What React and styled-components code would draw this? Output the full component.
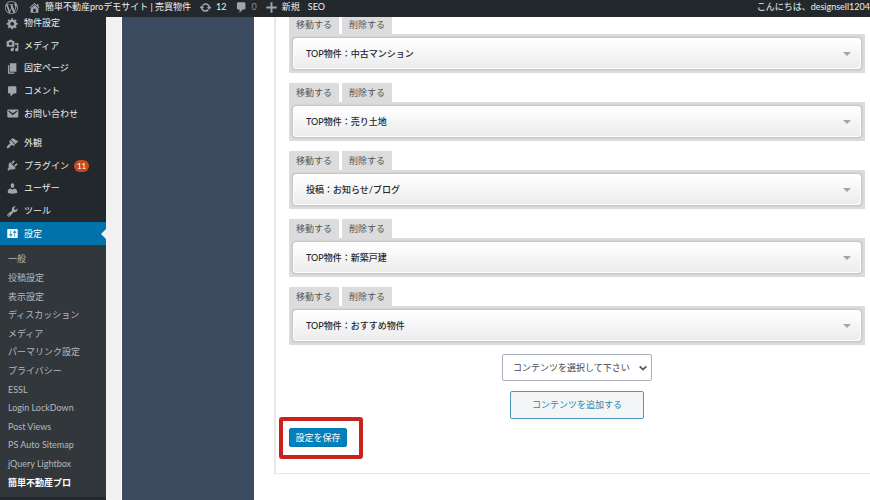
import React from "react";
import styled, { createGlobalStyle } from "styled-components";

const GlobalStyle = createGlobalStyle`
  * {
    box-sizing: border-box;
  }
  body {
    margin: 0;
    background: #fff;
    color: #23282d;
    font-family: Lato, "Noto Sans CJK JP", sans-serif;
    font-size: 9px;
    line-height: 14px;
  }
  button, select {
    font: inherit;
    margin: 0;
    cursor: pointer;
  }
  a {
    color: inherit;
    text-decoration: none;
  }
  ul {
    list-style: none;
    margin: 0;
    padding: 0;
  }
`;

const icons = {
  wordpress:
    "M20 10c0-5.51-4.49-10-10-10C4.48 0 0 4.49 0 10c0 5.52 4.48 10 10 10 5.51 0 10-4.48 10-10zM7.78 15.37L4.37 6.22c.55-.02 1.17-.08 1.17-.08.5-.06.44-1.13-.06-1.11 0 0-1.45.11-2.37.11-.18 0-.37 0-.58-.01C4.12 2.69 6.87 1.11 10 1.11c2.33 0 4.45.87 6.05 2.34-.68-.11-1.65.39-1.65 1.58 0 .74.45 1.36.9 2.1.35.61.55 1.36.55 2.46 0 1.49-1.4 5-1.4 5l-3.03-8.37c.54-.02.82-.17.82-.17.5-.05.44-1.25-.06-1.22 0 0-1.44.12-2.38.12-.87 0-2.33-.12-2.33-.12-.5-.03-.56 1.2-.06 1.22l.92.08 1.26 3.41zM17.41 10c.24-.64.74-1.87.43-4.25.7 1.29 1.05 2.71 1.05 4.25 0 3.29-1.73 6.24-4.4 7.78.97-2.59 1.94-5.2 2.92-7.78zM6.1 18.09C3.12 16.65 1.11 13.53 1.11 10c0-1.3.23-2.48.72-3.59C3.25 10.3 4.67 14.2 6.1 18.09zm4.03-6.63l2.58 6.98c-.86.29-1.76.45-2.71.45-.79 0-1.57-.11-2.29-.33.81-2.38 1.62-4.74 2.42-7.1z",
  home:
    "M16 8.5l1.53 1.53-1.06 1.06L10 4.6l-6.47 6.49-1.06-1.06L10 2.5l4 4v-2h2v4zm-6-2.46l6 5.99V18H4v-5.97zM12 17v-5H8v5h4z",
  update:
    "M10.2 3.28c3.53 0 6.43 2.61 6.92 6h2.08l-3.5 4-3.5-4h2.32c-.45-1.97-2.21-3.45-4.32-3.45-1.45 0-2.73.71-3.54 1.78L4.95 5.66C6.23 4.2 8.11 3.28 10.2 3.28zm-.4 13.44c-3.52 0-6.43-2.61-6.92-6H.8l3.5-4c1.17 1.33 2.33 2.67 3.5 4H5.48c.45 1.97 2.21 3.45 4.32 3.45 1.45 0 2.73-.71 3.54-1.78l1.71 1.95c-1.28 1.46-3.15 2.38-5.25 2.38z",
  comment:
    "M5 2h9c1.1 0 2 .9 2 2v7c0 1.1-.9 2-2 2h-2l-5 5v-5H5c-1.1 0-2-.9-2-2V4c0-1.1.9-2 2-2z",
  plus: "M18 8.5v3h-6.5V18h-3v-6.5H2v-3h6.5V2h3v6.5z",
  generic:
    "M18 12h-2.18c-.17.7-.44 1.35-.81 1.93l1.54 1.54-2.1 2.1-1.54-1.54c-.58.36-1.23.63-1.91.79V19H8v-2.18c-.68-.16-1.33-.43-1.91-.79l-1.54 1.54-2.12-2.12 1.54-1.54c-.36-.58-.63-1.23-.79-1.91H1V9.03h2.17c.16-.7.44-1.35.8-1.94L2.43 5.55l2.1-2.1 1.54 1.54c.58-.37 1.24-.64 1.93-.81V2h3v2.18c.68.16 1.33.43 1.91.79l1.54-1.54 2.12 2.12-1.54 1.54c.36.59.64 1.24.8 1.94H18V12zm-8.5 1.5c1.66 0 3-1.34 3-3s-1.34-3-3-3-3 1.34-3 3 1.34 3 3 3z",
  media:
    "M13 11V4c0-.55-.45-1-1-1h-1.67L9 1H5L3.67 3H2c-.55 0-1 .45-1 1v7c0 .55.45 1 1 1h10c.55 0 1-.45 1-1zM7 4.5c1.38 0 2.5 1.12 2.5 2.5S8.38 9.5 7 9.5 4.5 8.38 4.5 7 5.62 4.5 7 4.5zM14 6h5v10.5c0 1.38-1.12 2.5-2.5 2.5S14 17.88 14 16.5s1.12-2.5 2.5-2.5c.17 0 .34.02.5.05V9h-3V6zm-4 8.05V13h2v3.5c0 1.38-1.12 2.5-2.5 2.5S7 17.88 7 16.5 8.12 14 9.5 14c.17 0 .34.02.5.05z",
  page: "M6 15V2h10v13H6zm-1 1h8v2H3V5h2v11z",
  mail:
    "M3.87 4h13.25C18.37 4 19 4.59 19 5.79v8.42c0 1.19-.63 1.79-1.88 1.79H3.87c-1.25 0-1.88-.6-1.88-1.79V5.79c0-1.2.63-1.79 1.88-1.79zm6.62 8.6l6.74-5.53c.24-.2.43-.66.13-1.07-.29-.41-.82-.42-1.17-.17l-5.7 3.86L4.8 5.83c-.35-.25-.88-.24-1.17.17-.3.41-.11.87.13 1.07z",
  appearance:
    "M14.48 11.06L7.41 3.99l1.5-1.5c.5-.56 2.3-.47 3.51.32 1.21.8 1.43 1.28 2.91 2.1 1.18.64 2.45 1.26 4.45.85zm-.71.71L6.7 4.7 4.93 6.47c-.39.39-.39 1.02 0 1.41l1.06 1.06c.39.39.39 1.03 0 1.42-.6.6-1.43 1.11-2.21 1.69-.35.26-.7.53-1.01.84C1.43 14.23.4 16.08 1.4 17.07c.99 1 2.84-.03 4.18-1.36.31-.31.58-.66.85-1.02.57-.78 1.08-1.61 1.69-2.21.39-.39 1.02-.39 1.41 0l1.06 1.06c.39.39 1.02.39 1.41 0z",
  plugins:
    "M13.11 4.36L9.87 7.6 8 5.73l3.24-3.24c.35-.34 1.05-.2 1.56.32.52.51.66 1.21.31 1.55zm-8 1.77l.91-1.12 9.01 9.01-1.19.84c-.71.71-2.63 1.16-3.82 1.16H6.14L4.9 17.26c-.59.59-1.54.59-2.12 0-.59-.58-.59-1.53 0-2.12l1.24-1.24v-3.88c0-1.13.4-3.19 1.09-3.89zm7.26 3.97l3.24-3.24c.34-.35 1.04-.21 1.55.31.52.51.66 1.21.31 1.55l-3.24 3.25z",
  users:
    "M10 9.25c-2.27 0-2.73-3.44-2.73-3.44C7 4.02 7.82 2 9.97 2c2.16 0 2.98 2.02 2.71 3.81 0 0-.41 3.44-2.68 3.44zm0 2.57L12.72 10c2.39 0 4.52 2.33 4.52 4.53v2.49s-3.65 1.13-7.24 1.13c-3.65 0-7.24-1.13-7.24-1.13v-2.49c0-2.25 1.94-4.48 4.47-4.48z",
  tools:
    "M16.68 9.77c-1.34 1.34-3.3 1.67-4.95.99l-5.41 6.52c-.99.99-2.59.99-3.58 0s-.99-2.59 0-3.57l6.52-5.42c-.68-1.65-.35-3.61.99-4.95 1.28-1.28 3.12-1.62 4.72-1.06l-2.89 2.89 2.82 2.82 2.86-2.87c.53 1.58.18 3.39-1.08 4.65zM3.81 16.21c.4.39 1.04.39 1.43 0 .4-.4.4-1.04 0-1.43-.39-.4-1.03-.4-1.43 0-.39.39-.39 1.03 0 1.43z",
  settings:
    "M18 16V4c0-.55-.45-1-1-1H3c-.55 0-1 .45-1 1v12c0 .55.45 1 1 1h14c.55 0 1-.45 1-1zM8 11h1c.55 0 1 .45 1 1s-.45 1-1 1H8v1.5c0 .28-.22.5-.5.5s-.5-.22-.5-.5V13H6c-.55 0-1-.45-1-1s.45-1 1-1h1V5.5c0-.28.22-.5.5-.5s.5.22.5.5V11zm5-2h-1c-.55 0-1-.45-1-1s.45-1 1-1h1V5.5c0-.28.22-.5.5-.5s.5.22.5.5V7h1c.55 0 1 .45 1 1s-.45 1-1 1h-1v5.5c0 .28-.22.5-.5.5s-.5-.22-.5-.5V9z",
};

const Svg = styled.svg`
  flex: none;
  width: 13px;
  height: 13px;
  fill: ${(p) => p.$color || "#a0a5aa"};
`;

const Icon = ({ name, color }) => (
  <Svg viewBox="0 0 20 20" $color={color} aria-hidden="true">
    <path d={icons[name]} />
  </Svg>
);

/* ---- admin bar ---- */

const AdminBar = styled.header`
  position: fixed;
  top: 0;
  left: 0;
  right: 0;
  z-index: 10;
  height: 17px;
  padding: 0 0 3px 5px;
  display: flex;
  align-items: center;
  gap: 8px;
  background: #23282d;
  color: #eee;
  white-space: nowrap;
  overflow: hidden;
`;

const BarLink = styled.a`
  display: flex;
  align-items: center;
  gap: 4px;
  color: ${(p) => (p.$muted ? "#8a8f94" : "#eee")};
`;

const Logo = styled(BarLink)`
  padding-right: 2px;
`;

const Account = styled(BarLink)`
  margin-left: auto;
`;

/* ---- side menu ---- */

const Page = styled.div`
  display: flex;
  min-height: 100vh;
  background: #f1f1f1;
`;

const Sidebar = styled.nav`
  flex: none;
  width: 106px;
  padding-top: 12px;
  background: #23282d;
`;

const MenuGroup = styled.ul`
  display: grid;
  grid-auto-rows: 1fr;
  height: 113px;
  margin-top: ${(p) => (p.$spaced ? "7px" : "0")};
`;

const MenuLink = styled.a`
  position: relative;
  display: flex;
  align-items: center;
  gap: 5px;
  height: 100%;
  padding-left: 6px;
  color: ${(p) => (p.$active ? "#fff" : "#eee")};
  background: ${(p) => (p.$active ? "#0073aa" : "transparent")};

  &::after {
    content: "";
    display: ${(p) => (p.$active ? "block" : "none")};
    position: absolute;
    right: 0;
    top: calc(50% - 5px);
    border: 5px solid transparent;
    border-right-color: #f1f1f1;
    border-left: 0;
  }
`;

const Badge = styled.span`
  min-width: 15px;
  height: 12px;
  border-radius: 6px;
  background: #ca4a1f;
  color: #fff;
  font-size: 8px;
  line-height: 12px;
  text-align: center;
`;

const SubMenu = styled.ul`
  display: grid;
  grid-auto-rows: 1fr;
  height: 252px;
  padding: 5px 0;
  background: #32373c;
`;

const SubLink = styled.a`
  display: flex;
  align-items: center;
  height: 100%;
  padding-left: 8px;
  color: ${(p) => (p.$current ? "#fff" : "#b4b9be")};
  font-weight: ${(p) => (p.$current ? 700 : 400)};
`;

/* ---- main area ---- */

const TabColumn = styled.div`
  flex: none;
  width: 134px;
  margin-left: 15px;
  border: 1px solid #fff;
  border-width: 0 1px;
  background: #3c4a60;
`;

const Content = styled.main`
  flex: 1;
  min-width: 0;
  padding: 0 0 26px 19px;
  background: #fff;
`;

const Panel = styled.form`
  padding: 15px 5px 26px 13px;
  border: 2px solid #e8e8e8;
  border-width: 0 0 1px 2px;
`;

const Widget = styled.section`
  margin-bottom: 10px;

  &:last-of-type {
    margin-bottom: 9px;
  }
`;

const Tabs = styled.div`
  display: flex;
  gap: 3px;
`;

const TabButton = styled.button`
  width: 50px;
  height: 19px;
  padding: 0;
  border: 0;
  background: #dcdcdc;
  color: #555;
`;

const WidgetFrame = styled.div`
  padding: 4px;
  background: #dcdcdc;
`;

const WidgetToggle = styled.button`
  display: flex;
  align-items: center;
  justify-content: space-between;
  width: 100%;
  height: 31px;
  padding: 0 9px 0 12px;
  border: 1px solid #fff;
  border-radius: 3px;
  background: linear-gradient(#fff, #ececec);
  box-shadow: 0 0 2px 1px #bebebe;
  color: #23282d;
  font-weight: 500;

  &::after {
    content: "";
    border: 4px solid transparent;
    border-top-color: #a5a5a5;
    border-bottom: 0;
  }
`;

const AddArea = styled.div`
  display: flex;
  flex-direction: column;
  align-items: center;
  gap: 10px;
`;

const SelectBox = styled.div`
  position: relative;
  width: 150px;

  svg {
    position: absolute;
    right: 4px;
    top: 9px;
    width: 10px;
    height: 10px;
    fill: none;
    stroke: #555;
    stroke-width: 2;
    pointer-events: none;
  }
`;

const Select = styled.select`
  appearance: none;
  display: block;
  width: 100%;
  height: 27px;
  padding: 0 14px 0 10px;
  border: 1px solid #a9afb8;
  border-radius: 2px;
  background: #fff;
  color: #444;
`;

const AddButton = styled.button`
  width: 134px;
  height: 28px;
  border: 1px solid #4a9bbf;
  border-radius: 2px;
  background: #f3f5f6;
  color: #2a85ae;
`;

const SaveArea = styled.div`
  position: relative;
  width: fit-content;
  margin-top: 9px;

  &::after {
    content: "";
    position: absolute;
    inset: -11px -16px -12px -10px;
    border: 4px solid #cb221c;
    border-radius: 3px;
    pointer-events: none;
  }
`;

const SaveButton = styled.button`
  display: block;
  width: 58px;
  height: 19px;
  padding: 0;
  border: 1px solid #007ab5;
  border-radius: 2px;
  background: #0080bd;
  color: #fff;
`;

const contentMenu = [
  { icon: "generic", label: "物件設定" },
  { icon: "media", label: "メディア" },
  { icon: "page", label: "固定ページ" },
  { icon: "comment", label: "コメント" },
  { icon: "mail", label: "お問い合わせ" },
];

const systemMenu = [
  { icon: "appearance", label: "外観" },
  { icon: "plugins", label: "プラグイン", count: 11 },
  { icon: "users", label: "ユーザー" },
  { icon: "tools", label: "ツール" },
  { icon: "settings", label: "設定", active: true },
];

const subMenu = [
  "一般",
  "投稿設定",
  "表示設定",
  "ディスカッション",
  "メディア",
  "パーマリンク設定",
  "プライバシー",
  "ESSL",
  "Login LockDown",
  "Post Views",
  "PS Auto Sitemap",
  "jQuery Lightbox",
  "簡単不動産プロ",
];

const widgets = [
  "TOP物件：中古マンション",
  "TOP物件：売り土地",
  "投稿：お知らせ/ブログ",
  "TOP物件：新築戸建",
  "TOP物件：おすすめ物件",
];

const Menu = ({ items, spaced }) => (
  <MenuGroup $spaced={spaced}>
    {items.map(({ icon, label, count, active }) => (
      <li key={label}>
        <MenuLink href="#" $active={active}>
          <Icon name={icon} color={active && "#fff"} />
          {label}
          {count && <Badge>{count}</Badge>}
        </MenuLink>
      </li>
    ))}
  </MenuGroup>
);

const App = () => {
  return (
    <>
      <GlobalStyle />
      <AdminBar>
        <Logo href="#" aria-label="WordPress">
          <Icon name="wordpress" />
        </Logo>
        <BarLink href="#">
          <Icon name="home" />
          簡単不動産proデモサイト | 売買物件
        </BarLink>
        <BarLink href="#">
          <Icon name="update" />
          12
        </BarLink>
        <BarLink href="#" $muted>
          <Icon name="comment" />0
        </BarLink>
        <BarLink href="#">
          <Icon name="plus" />
          新規
        </BarLink>
        <BarLink href="#">SEO</BarLink>
        <Account href="#">こんにちは、designsell1204</Account>
      </AdminBar>

      <Page>
        <Sidebar>
          <Menu items={contentMenu} />
          <Menu items={systemMenu} spaced />
          <SubMenu>
            {subMenu.map((label, i) => (
              <li key={label}>
                <SubLink href="#" $current={i === subMenu.length - 1}>
                  {label}
                </SubLink>
              </li>
            ))}
          </SubMenu>
        </Sidebar>

        <TabColumn />

        <Content>
          <Panel onSubmit={(e) => e.preventDefault()}>
            {widgets.map((title) => (
              <Widget key={title}>
                <Tabs>
                  <TabButton type="button">移動する</TabButton>
                  <TabButton type="button">削除する</TabButton>
                </Tabs>
                <WidgetFrame>
                  <WidgetToggle type="button">{title}</WidgetToggle>
                </WidgetFrame>
              </Widget>
            ))}

            <AddArea>
              <SelectBox>
                <Select aria-label="コンテンツ">
                  <option>コンテンツを選択して下さい</option>
                </Select>
                <svg viewBox="0 0 12 12" aria-hidden="true">
                  <path d="M2 4l4 4 4-4" />
                </svg>
              </SelectBox>
              <AddButton type="button">コンテンツを追加する</AddButton>
            </AddArea>

            <SaveArea>
              <SaveButton type="submit">設定を保存</SaveButton>
            </SaveArea>
          </Panel>
        </Content>
      </Page>
    </>
  );
};

export default App;
